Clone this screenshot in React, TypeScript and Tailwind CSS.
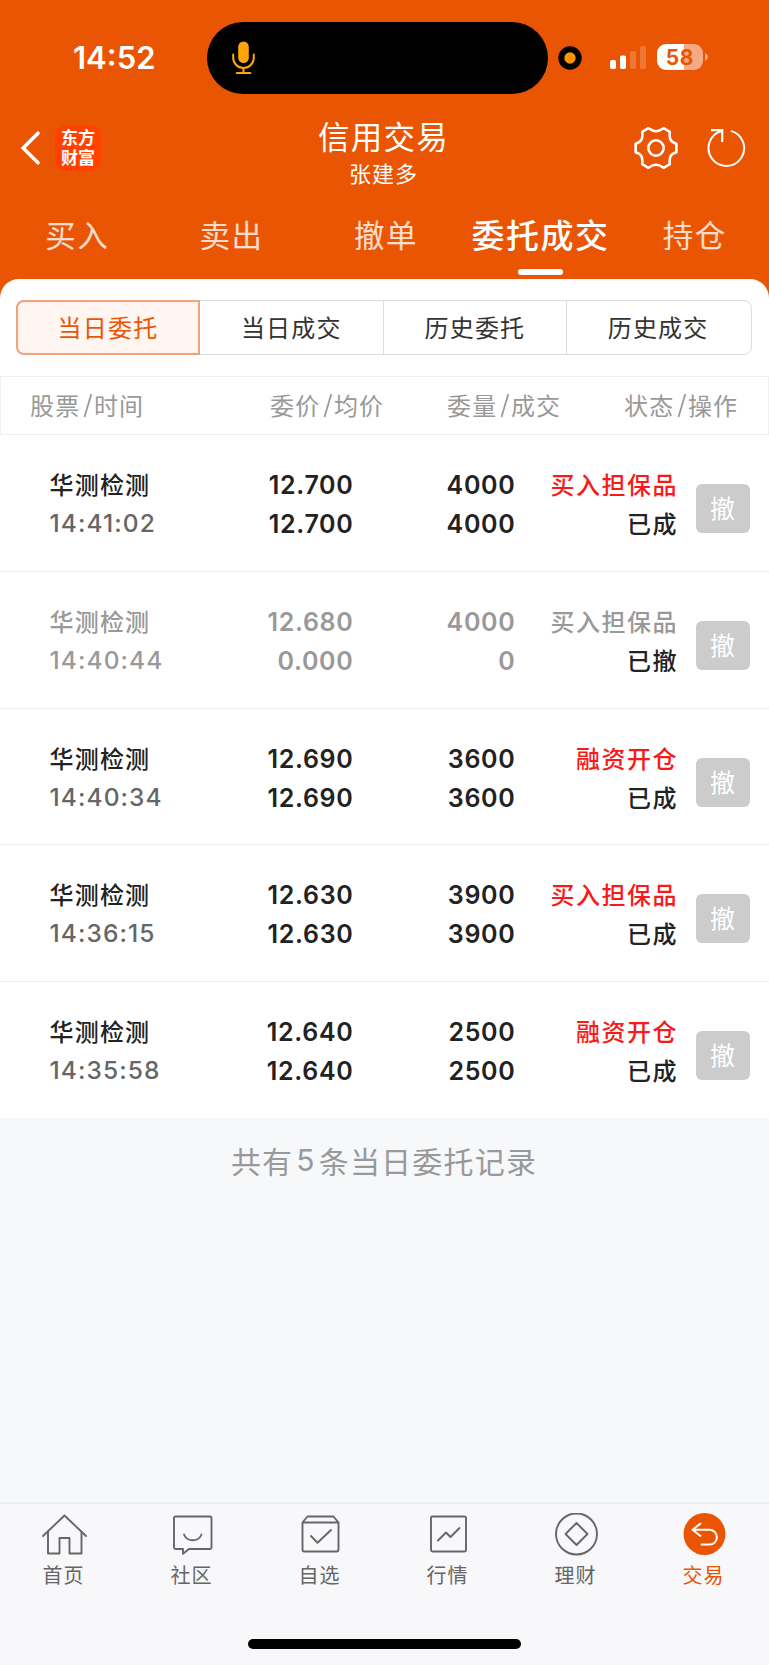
import React from "react";

type Order = {
  name: string;
  time: string;
  price: string;
  avg: string;
  qty: string;
  filled: string;
  kind: string;
  state: string;
  cancelled?: boolean;
};

const orders: Order[] = [
  { name: "华测检测", time: "14:41:02", price: "12.700", avg: "12.700", qty: "4000", filled: "4000", kind: "买入担保品", state: "已成" },
  { name: "华测检测", time: "14:40:44", price: "12.680", avg: "0.000", qty: "4000", filled: "0", kind: "买入担保品", state: "已撤", cancelled: true },
  { name: "华测检测", time: "14:40:34", price: "12.690", avg: "12.690", qty: "3600", filled: "3600", kind: "融资开仓", state: "已成" },
  { name: "华测检测", time: "14:36:15", price: "12.630", avg: "12.630", qty: "3900", filled: "3900", kind: "买入担保品", state: "已成" },
  { name: "华测检测", time: "14:35:58", price: "12.640", avg: "12.640", qty: "2500", filled: "2500", kind: "融资开仓", state: "已成" },
];

const tabs = ["买入", "卖出", "撤单", "委托成交", "持仓"];
const segments = ["当日委托", "当日成交", "历史委托", "历史成交"];

function StatusBar() {
  return (
    <div className="grid h-[116px] grid-cols-[207px_341px_1fr] items-center font-['Inter',sans-serif]">
      <div className="pl-[73px] text-[31px] leading-[36px] font-semibold">14:52</div>
      <div className="flex h-[72px] items-center rounded-full bg-black pl-[25px]">
        <svg width="23" height="34" viewBox="0 0 23 34" fill="none" stroke="#ffa60a" strokeWidth="2" strokeLinecap="round">
          <rect x="6.2" y="0.5" width="10.6" height="21.5" rx="5.3" fill="#ffa60a" stroke="none" />
          <path d="M1.2 13.500v3.200a10.300 10.300 0 0 0 20.600 0v-3.200M11.500 27v5M4.800 32h13.600" />
        </svg>
      </div>
      <div className="flex items-center pl-[10px]">
        <svg width="24" height="24" viewBox="0 0 24 24">
          <circle cx="12" cy="12" r="11.7" fill="#000" />
          <circle cx="12" cy="12" r="5.7" fill="#ff9500" />
        </svg>
        <svg className="ml-[28px]" width="36" height="24" viewBox="0 0 36 24" fill="#fff">
          <rect x="0" y="14" width="6" height="9" rx="1.8" />
          <rect x="10" y="9.5" width="6" height="13.5" rx="1.8" />
          <rect x="20" y="5" width="6" height="18" rx="1.8" fillOpacity="0.2" />
          <rect x="30" y="0" width="6" height="23" rx="1.8" fillOpacity="0.2" />
        </svg>
        <div className="mt-[-2px] ml-[11px] flex h-[26px] w-[46px] items-center justify-center rounded-[9px] bg-linear-to-r from-white from-58% to-[#f4ab84] to-58% pt-[2px] text-[21px] leading-[24px] font-bold tracking-[0.6px] text-[#ea5504]">
          58
        </div>
        <svg className="mt-[-2px] ml-[2px]" width="3" height="8" viewBox="0 0 3 8">
          <path d="M0 0Q3 1.500 3 4T0 8Z" fill="#f4ab84" />
        </svg>
      </div>
    </div>
  );
}

function TitleBar() {
  return (
    <div className="grid h-[72px] grid-cols-[219px_1fr_219px]">
      <div className="flex h-[64px] items-center pl-[20px]">
        <svg width="21" height="36" viewBox="0 0 21 36" fill="none" stroke="#fff" strokeWidth="3.6" strokeLinecap="round" strokeLinejoin="miter">
          <path d="M18 3.200 3.200 18 18 32.800" />
        </svg>
        <div className="ml-[14px] flex h-[46px] w-[46px] flex-col items-center justify-center rounded-[10px] bg-[#ff4200] pt-px font-['Liberation_Sans','Noto_Sans_CJK_SC',sans-serif] text-[17px] leading-[19.5px] font-bold">
          <span>东方</span>
          <span>财富</span>
        </div>
      </div>
      <div className="flex flex-col items-center pr-[2px]">
        <div className="h-[40px] text-[31.5px] leading-[38px] tracking-[1.3px]">信用交易</div>
        <div className="h-[32px] text-[22px] leading-[33px] tracking-[1px]">张建多</div>
      </div>
      <div className="flex h-[64px] items-center pl-[84px]">
        <svg width="44" height="44" viewBox="0 0 44 44" fill="none" stroke="#fff" strokeWidth="2.6" strokeLinejoin="round">
          <path d="M14.400 2.200C17 4 18.500 5.200 22 5.200S27 4 29.600 2.200L35.800 5.800C35.600 9 35.200 12 37 14.400S40 16.500 42.400 17.700V26.300C40 27.500 38.800 27.200 37 29.600S35.600 35 35.800 38.200L29.600 41.800C27 40 25.500 38.800 22 38.800S17 40 14.400 41.800L8.200 38.200C8.400 35 8.800 32 7 29.600S4 27.500 1.600 26.300V17.700C4 16.500 5.200 16.800 7 14.400S8.400 9 8.200 5.800Z" />
          <circle cx="22" cy="22" r="7.7" />
        </svg>
        <svg className="ml-[29px]" width="40" height="40" viewBox="0 0 40 40" fill="none" stroke="#fff" strokeWidth="2">
          <path d="M23.800 2.900A17.800 17.800 0 1 1 14.500 3" />
          <path d="M4 2.200H15.200V14" strokeWidth="2.200" />
        </svg>
      </div>
    </div>
  );
}

function TopTabs() {
  return (
    <div className="grid h-[91px] w-[772px] grid-cols-5 pt-[23px]">
      {tabs.map((t) =>
        t === "委托成交" ? (
          <div key={t} className="flex flex-col items-center">
            <span className="h-[48px] text-[33px] leading-[47px] font-medium tracking-[1.5px] whitespace-nowrap">{t}</span>
            <span className="mt-[10px] h-[6px] w-[45px] rounded-full bg-white" />
          </div>
        ) : (
          <div key={t} className="text-center text-[30.5px] leading-[47px] tracking-[1.5px] text-white/80">{t}</div>
        ),
      )}
    </div>
  );
}

function Segments() {
  return (
    <div className="mr-[17px] ml-[16px] mt-[20px] flex h-[55px] rounded-[8px] border border-[#d9dce4] text-[24px] leading-[52px] tracking-[1.2px] text-[#333]">
      {segments.map((s, i) => (
        <div
          key={s}
          className={
            i === 0
              ? "-my-px -ml-px w-[184px] rounded-l-[8px] border-2 border-[#f2a37c] bg-[#fff6f2] text-center leading-[50px] text-[#ea5504]"
              : i === 3
                ? "flex-1 pr-[2px] text-center"
                : "w-[183.6px] border-r border-[#d9dce4] text-center"
          }
        >
          {s}
        </div>
      ))}
    </div>
  );
}

function HeadCell({ a, b }: { a: string; b: string }) {
  return (
    <span className="flex items-center pb-px">
      {a}
      <svg className="mr-[1px] ml-[2.5px]" width="10" height="26" viewBox="0 0 10 26" stroke="#999" strokeWidth="1.8">
        <path d="M8.300 2 1.500 25" />
      </svg>
      {b}
    </span>
  );
}

function OrderRow({ o }: { o: Order }) {
  const main = o.cancelled ? "text-[#999]" : "text-[#222]";
  const nums = "pt-[1px] text-right font-['Inter',sans-serif] text-[25px] font-semibold tracking-[0.7px] " + main;
  return (
    <div className="grid h-[136.8px] grid-cols-[200px_153.5px_162px_162.5px_1fr] border-b border-[#f0f0f0] pt-[30px] text-[24px] leading-[39px] font-medium last:h-[136px] last:border-b-0">
      <div className="pl-[49.5px]">
        <div className={"-mt-px h-[40px] tracking-[1.2px] " + main}>{o.name}</div>
        <div className={"font-['Inter',sans-serif] text-[24.5px] tracking-[1.1px] " + (o.cancelled ? "text-[#999]" : "text-[#666]")}>{o.time}</div>
      </div>
      <div className={nums}>
        <div>{o.price}</div>
        <div>{o.avg}</div>
      </div>
      <div className={nums}>
        <div>{o.qty}</div>
        <div>{o.filled}</div>
      </div>
      <div className="-mt-px text-right tracking-[1.5px]">
        <div className={o.cancelled ? "text-[#999]" : "text-[#fa1919]"}>{o.kind}</div>
        <div className="text-[#222]">{o.state}</div>
      </div>
      <div className="pt-[19px] pl-[17.5px]">
        <button className="block h-[49px] w-[54px] rounded-[6px] bg-[#ccc] pb-[2px] text-center text-[25px] leading-[47px] font-normal text-white">撤</button>
      </div>
    </div>
  );
}

const navItems: { label: string; icon: React.ReactNode }[] = [
  {
    label: "首页",
    icon: (
      <g>
        <path d="M1 23 22.500 2.500 44 23" />
        <path d="M6 19v21.500h11.500v-15.500h10V40.500H39.500V19" />
      </g>
    ),
  },
  {
    label: "社区",
    icon: (
      <g>
        <path d="M5.500 3.500h34.500a1.500 1.500 0 0 1 1.500 1.500v29.500a1.500 1.500 0 0 1-1.500 1.500H19l-6 4.800V36H5.500A1.500 1.500 0 0 1 4 34.500V5a1.500 1.500 0 0 1 1.500-1.500z" />
        <path d="M14 21.500a9.500 9.500 0 0 0 17.500 0" />
      </g>
    ),
  },
  {
    label: "自选",
    icon: (
      <g>
        <path d="M4.500 9.500 9.500 3.500h26l5 6v27a2 2 0 0 1-2 2h-32a2 2 0 0 1-2-2zM4.500 9.500h36" />
        <path d="m13 23 6.500 6.800L33 17" />
      </g>
    ),
  },
  {
    label: "行情",
    icon: (
      <g>
        <rect x="5" y="3.500" width="35" height="35" rx="1.500" />
        <path d="m12 27.500 8-8 4.500 4.500 9-9" />
      </g>
    ),
  },
  {
    label: "理财",
    icon: (
      <g>
        <circle cx="22.500" cy="21" r="20.500" />
        <path d="M22.500 10 33.500 21 22.500 32 11.500 21z" />
      </g>
    ),
  },
  {
    label: "交易",
    icon: (
      <g>
        <circle cx="22.500" cy="21" r="21" fill="#ea5504" stroke="none" />
        <path d="M18.500 10.500 10.500 16.800 18.500 23M10.500 16.800H27.500a7.300 7.300 0 0 1 0 14.800H19.500" stroke="#fff" strokeWidth="2" />
      </g>
    ),
  },
];

function BottomNav() {
  return (
    <div className="h-[163px] border-t-2 border-[#ebecef] bg-[#f8f8fb]">
      <div className="grid h-[135px] grid-cols-6 pr-[1px]">
        {navItems.map((n, i) => (
          <div key={n.label} className={"flex flex-col items-center pt-[9px] " + (i === 5 ? "text-[#ea5504]" : "text-[#666]")}>
            <svg width="45" height="43" viewBox="0 0 45 43" fill="none" stroke="currentColor" strokeWidth="1.900" strokeLinecap="round" strokeLinejoin="round">
              {n.icon}
            </svg>
            <span className="mt-[5px] mr-[1px] text-[20px] leading-[28px] tracking-[1px]">{n.label}</span>
          </div>
        ))}
      </div>
      <div className="ml-[248px] h-[10px] w-[273px] rounded-full bg-black" />
    </div>
  );
}

export default function App() {
  return (
    <div className="flex h-[1665px] w-[769px] flex-col overflow-hidden bg-[#f7f8fa] font-['Noto_Sans_CJK_SC',sans-serif]">
      <div className="h-[279px] shrink-0 bg-[#ea5504] text-white">
        <StatusBar />
        <TitleBar />
        <TopTabs />
      </div>
      <div className="bg-[#ea5504]">
        <div className="rounded-t-[19px] bg-white">
          <div className="h-[97px] pt-px">
            <Segments />
          </div>
          <div className="flex h-[59px] border border-[#f0f0f0] text-[24px] tracking-[1.2px] text-[#999]">
            <div className="flex w-[239px] pl-[29px]"><HeadCell a="股票" b="时间" /></div>
            <div className="flex w-[177px] pl-[30px]"><HeadCell a="委价" b="均价" /></div>
            <div className="flex w-[177px] pl-[30px]"><HeadCell a="委量" b="成交" /></div>
            <div className="flex pl-[30px]"><HeadCell a="状态" b="操作" /></div>
          </div>
          {orders.map((o) => (
            <OrderRow key={o.time} o={o} />
          ))}
        </div>
      </div>
      <div className="flex flex-1 justify-center bg-[#f7f8fa] pt-[20px] pr-[1px] text-[30px] leading-[44px] tracking-[1.2px] text-[#999]">
        <span>共有</span>
        <span className="mx-[3px] font-['Inter',sans-serif]">5</span>
        <span>条当日委托记录</span>
      </div>
      <BottomNav />
    </div>
  );
}
